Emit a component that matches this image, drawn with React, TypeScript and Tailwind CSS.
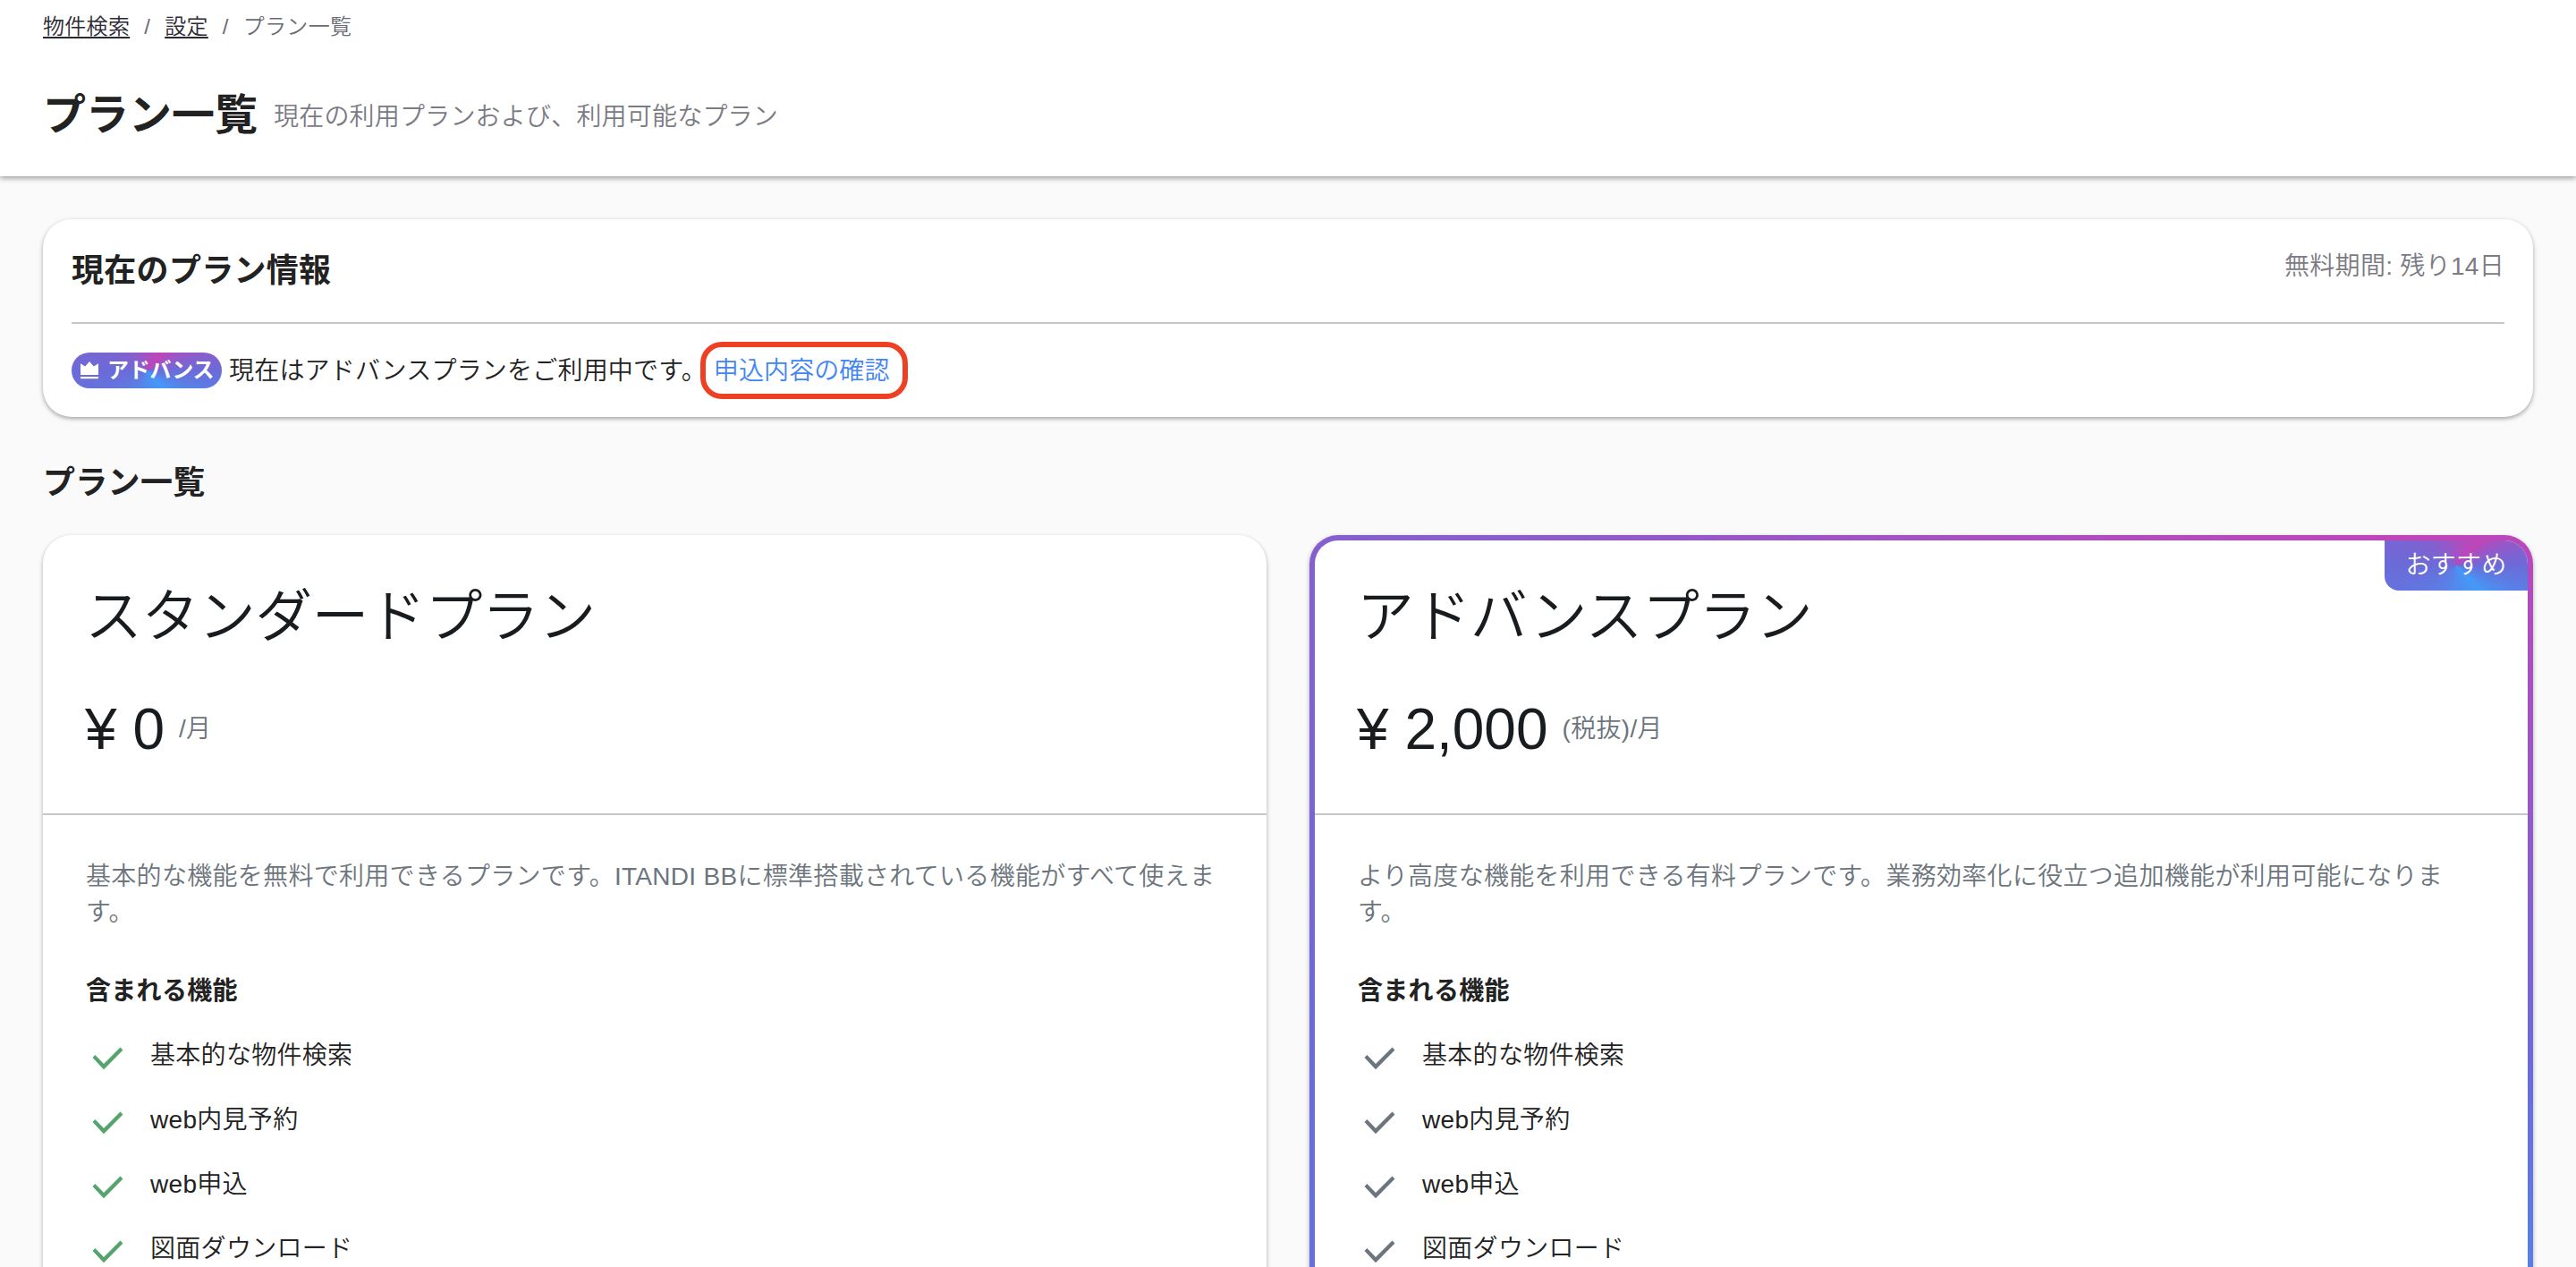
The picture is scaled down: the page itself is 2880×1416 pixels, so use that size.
import React from 'react';

interface Plan {
  name: string;
  price: string;
  unit: string;
  description: string;
  features: string[];
  recommended: boolean;
}

const features = ['基本的な物件検索', 'web内見予約', 'web申込', '図面ダウンロード'];

const plans: Plan[] = [
  {
    name: 'スタンダードプラン',
    price: '¥ 0',
    unit: '/月',
    description: '基本的な機能を無料で利用できるプランです。ITANDI BBに標準搭載されている機能がすべて使えます。',
    features,
    recommended: false,
  },
  {
    name: 'アドバンスプラン',
    price: '¥ 2,000',
    unit: '(税抜)/月',
    description: 'より高度な機能を利用できる有料プランです。業務効率化に役立つ追加機能が利用可能になります。',
    features,
    recommended: true,
  },
];

const brandGradient =
  'bg-[conic-gradient(from_45deg,#c045b8,#6b6bd8_12.5%,#4499f8_25%,#6b6bd8_62.5%,#c045b8)]';

const CheckIcon: React.FC<{ className: string }> = ({ className }) => (
  <svg viewBox="0 0 48 48" className={className} fill="currentColor">
    <path d="M7.5 26 20 39.2 41.5 17.4 38.5 14.6 20 33 10.4 23z" />
  </svg>
);

const CrownIcon: React.FC = () => (
  <svg viewBox="0 0 20 20" className="w-5 h-5 shrink-0" fill="currentColor">
    <path d="M0 2.2 5.2 5.4 10 0l4.8 5.4L20 2.2V15H0z" />
    <path d="M0 17h20v2.2H0z" />
  </svg>
);

const PlanCard: React.FC<{ plan: Plan }> = ({ plan }) => {
  const shell = plan.recommended
    ? `h-[1170px] rounded-[32px] p-[6px] shadow-[0_2px_5px_rgba(0,0,0,0.3)] ${brandGradient}`
    : 'h-[1170px] rounded-[32px] shadow-[0_2px_5px_rgba(0,0,0,0.3)] bg-white';
  const inner = plan.recommended
    ? 'relative h-full bg-white rounded-[26px] overflow-hidden'
    : 'h-full';
  const head = plan.recommended
    ? 'h-[307px] pl-[47px] pt-[47px] border-b-2 border-[#c6c6c6]'
    : 'h-[313px] pl-[47px] pt-[53px] border-b-2 border-[#c6c6c6]';

  return (
    <div className={shell}>
      <div className={inner}>
        {plan.recommended && (
          <span className={`absolute top-0 right-0 w-[160px] h-[56px] flex items-center justify-center rounded-bl-[16px] text-white text-[28px] ${brandGradient}`}>
            おすすめ
          </span>
        )}
        <div className={head}>
          <h3 className="text-[64px] leading-[76px] tracking-[-0.6px] text-[#181c1f]">{plan.name}</h3>
          <div className="flex items-center mt-[50px] gap-4">
            <span className="text-[64px] leading-[76px] tracking-normal text-[#181c1f]">{plan.price}</span>
            <span className="text-[28px] leading-10 text-[#6c757d]">{plan.unit}</span>
          </div>
        </div>
        <div className="px-12 pt-[49px]">
          <p className="text-[28px] leading-10 text-[#6c757d]">{plan.description}</p>
          <h4 className="mt-12 text-[28px] leading-10 font-bold">含まれる機能</h4>
          <ul className="mt-4">
            {plan.features.map((feature) => (
              <li key={feature} className="flex items-center h-[72px] text-[28px]">
                <CheckIcon className={plan.recommended ? 'w-12 h-12 mr-6 text-[#6c757d]' : 'w-12 h-12 mr-6 text-[#55a46e]'} />
                <span>{feature}</span>
              </li>
            ))}
          </ul>
        </div>
      </div>
    </div>
  );
};

const App: React.FC = () => {
  return (
    <div className="w-full h-[1416px] overflow-hidden bg-[#fafafa] text-[#222] font-[350] tracking-[0.3px] font-['Liberation_Sans','Noto_Sans_CJK_JP',sans-serif]">
      <header className="h-[197px] px-12 bg-white shadow-[0_2px_6px_rgba(0,0,0,0.4)]">
        <nav className="flex items-center pt-3 text-[24px] leading-9 text-[#6b6b75]">
          <a className="underline decoration-2 underline-offset-3 text-[#2b2933]">物件検索</a>
          <span className="mx-4">/</span>
          <a className="underline decoration-2 underline-offset-3 text-[#2b2933]">設定</a>
          <span className="mx-4">/</span>
          <span>プラン一覧</span>
        </nav>
        <div className="flex items-center mt-[45px]">
          <h1 className="text-[48px] leading-[72px] tracking-normal font-bold">プラン一覧</h1>
          <span className="ml-[18px] mt-1 text-[28px] leading-10 tracking-[0.2px] text-[#7b7b83]">現在の利用プランおよび、利用可能なプラン</span>
        </div>
      </header>

      <main className="px-12 pt-12">
        <section className="h-[221px] px-8 rounded-[32px] bg-white shadow-[0_2px_5px_rgba(0,0,0,0.35)]">
          <div className="flex justify-between h-[117px] pt-[33px] border-b-2 border-[#c6c6c6]">
            <h2 className="text-[36px] leading-[50px] font-bold">現在のプラン情報</h2>
            <span className="text-[28px] leading-10 text-[#7b7b83]">無料期間: 残り14日</span>
          </div>
          <div className="flex items-center pt-5 text-[28px]">
            <span className={`flex items-center w-[168px] h-10 pl-[10px] gap-[10px] rounded-full text-white text-[24px] tracking-[-0.3px] font-bold ${brandGradient}`}>
              <CrownIcon />
              アドバンス
            </span>
            <span className="ml-2 pt-px tracking-[0.2px]">現在はアドバンスプランをご利用中です。</span>
            <a className="flex items-center -ml-[7px] pl-[9px] pt-px w-[232px] h-16 rounded-[24px] border-[6px] border-[#ee4124] tracking-[0.1px] text-[#4285f4]">
              申込内容の確認
            </a>
          </div>
        </section>

        <h2 className="mt-[49px] text-[36px] leading-[50px] font-bold">プラン一覧</h2>
        <div className="grid grid-cols-2 gap-12 mt-[33px]">
          {plans.map((plan) => (
            <PlanCard key={plan.name} plan={plan} />
          ))}
        </div>
      </main>
    </div>
  );
};

export default App;
